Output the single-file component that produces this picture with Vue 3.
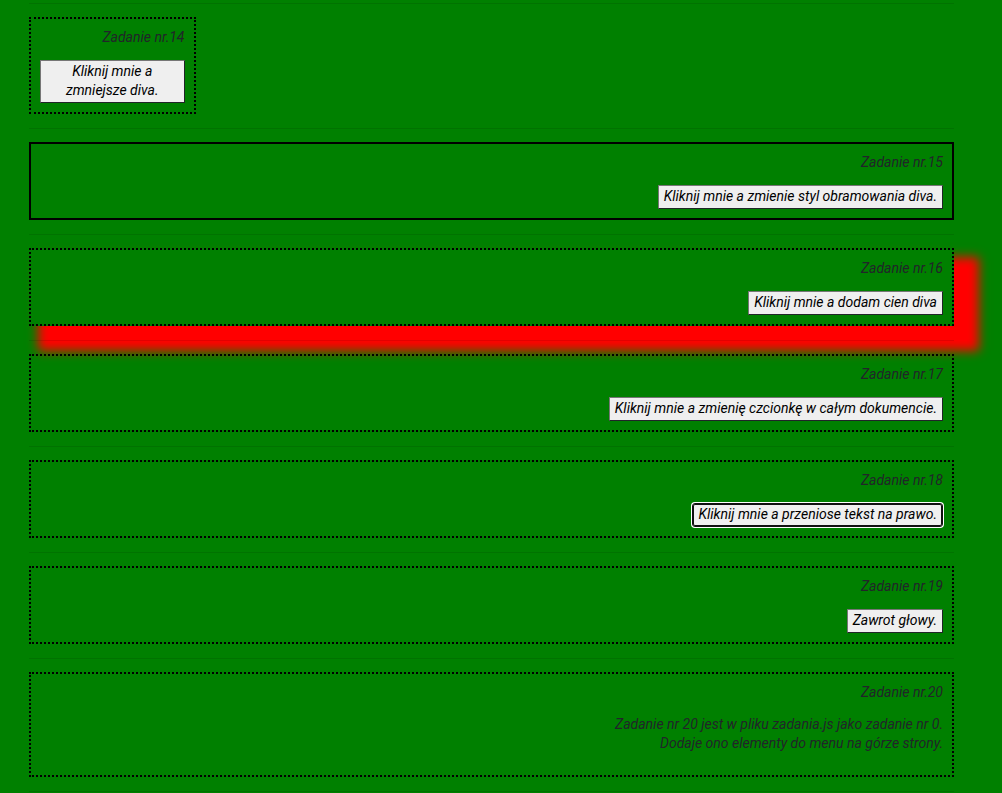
<script setup>
const tasks = [
  { id: 14, button: 'Kliknij mnie a zmniejsze diva.', kind: 'narrow' },
  { id: 15, button: 'Kliknij mnie a zmienie styl obramowania diva.', kind: 'solid' },
  { id: 16, button: 'Kliknij mnie a dodam cien diva', kind: 'shadow' },
  { id: 17, button: 'Kliknij mnie a zmienię czcionkę w całym dokumencie.' },
  { id: 18, button: 'Kliknij mnie a przeniose tekst na prawo.', active: true },
  { id: 19, button: 'Zawrot głowy.' },
  { id: 20, lines: ['Zadanie nr 20 jest w pliku zadania.js jako zadanie nr 0.', 'Dodaje ono elementy do menu na górze strony.'] },
]
</script>

<template>
  <main class="page">
    <template v-for="task in tasks" :key="task.id">
      <hr class="rule" />
      <section class="task" :class="task.kind">
        <p class="text">Zadanie nr.{{ task.id }}</p>
        <button v-if="task.button" type="button" class="action" :class="{ active: task.active }">{{ task.button }}</button>
        <p v-else class="text">
          <template v-for="(line, i) in task.lines" :key="i"><br v-if="i" />{{ line }}</template>
        </p>
      </section>
    </template>
    <hr class="rule" />
  </main>
</template>

<style>
body {
  margin: 0;
  background: #008000;
}
</style>

<style scoped>
.page {
  padding: 3px 48px 0 29px;
  color: #212529;
  font: italic 14px/19px Roboto, "Liberation Sans", sans-serif;
  text-align: right;
}
.rule {
  height: 1px;
  margin: 14px 0 13px;
  border: 0;
  background: rgba(0, 0, 0, 0.1);
}
.rule:first-child {
  margin-top: 0;
}
.rule:last-child {
  margin-bottom: 0;
}
.task {
  box-sizing: border-box;
  padding: 9px;
  border: 2px dotted #000;
}
.narrow {
  width: 18%;
}
.solid {
  border-style: solid;
}
.shadow {
  box-shadow: 17px 17px 10px 8px #f00;
}
.text {
  margin: 0 0 13px;
}
.action {
  display: block;
  margin: 0 0 0 auto;
  padding: 1px 5px 2px;
  border: 1px solid;
  border-color: #767676 #212529 #212529 #767676;
  border-radius: 0;
  background: #efefef;
  color: #000;
  font: inherit;
  text-align: center;
}
.active {
  border-color: #101010;
  border-radius: 3px;
  box-shadow: inset 0 0 0 1px #101010, 0 0 0 1px #fff;
}
</style>
